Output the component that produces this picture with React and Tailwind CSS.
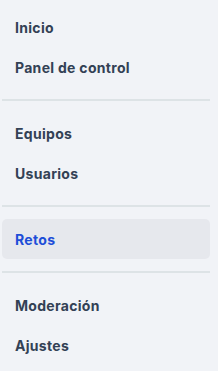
import React from 'react';

const sections = [
  ['Inicio', 'Panel de control'],
  ['Equipos', 'Usuarios'],
  ['Retos'],
  ['Moderación', 'Ajustes'],
];

const NavItem = ({ label, active }) => (
  <a
    href="#"
    className={`flex items-center h-10 pl-[13px] rounded-[5px] text-[14px] font-bold tracking-[0.3px] ${
      active ? 'bg-[#e6e8ed] text-[#1d4ed8]' : 'text-[#334155]'
    }`}
  >
    {label}
  </a>
);

export default function App() {
  return (
    <nav
      className="w-[218px] h-[371px] bg-[#f1f3f7] pt-[7px] pl-[2px] pr-[8px]"
      style={{ fontFamily: 'Inter, "Open Sans", sans-serif' }}
    >
      {sections.map((items, i) => (
        <div key={i}>
          {i > 0 && <div className="h-[2px] bg-[#dde3e6] my-[12px]" />}
          {items.map((label) => (
            <NavItem key={label} label={label} active={label === 'Retos'} />
          ))}
        </div>
      ))}
    </nav>
  );
}
